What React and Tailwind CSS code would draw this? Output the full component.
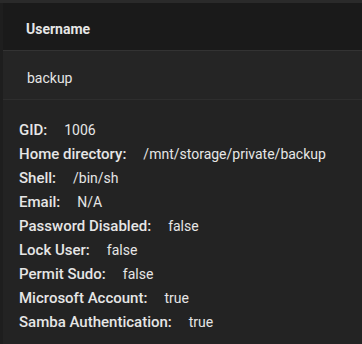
export default function App() {
  const rows = [
    ["GID:", "1006"],
    ["Home directory:", "/mnt/storage/private/backup"],
    ["Shell:", "/bin/sh"],
    ["Email:", "N/A"],
    ["Password Disabled:", "false"],
    ["Lock User:", "false"],
    ["Permit Sudo:", "false"],
    ["Microsoft Account:", "true"],
    ["Samba Authentication:", "true"],
  ];
  return (
    <div className="w-[362px] h-[344px] bg-[#1e1e1e] overflow-hidden" style={{ fontFamily: "Roboto, sans-serif" }}>
      <div className="h-[3px] bg-[#2a2a2a]" />
      <div className="pl-[3px] h-full">
        <div className="h-[48px] bg-[#1a1a1a] border-b border-[#333] flex items-center pl-[23px] pt-[5px] text-[14px] font-bold text-[#e6e6e6]">
          Username
        </div>
        <div className="h-[49px] bg-[#252525] border-b border-[#2e2e2e] flex items-center pl-[24px] pt-[6px] text-[14px] text-[#e6e6e6]">
          backup
        </div>
        <div className="bg-[#232323] h-full pl-[16px] pt-[18px] flex flex-col">
          {rows.map(([k, v]) => (
            <div key={k} className="h-[24px] flex items-center text-[#e6e6e6]">
              <span className="font-medium text-[15px]">{k}</span>
              <span className="ml-[17px] text-[14px]">{v}</span>
            </div>
          ))}
        </div>
      </div>
    </div>
  );
}
